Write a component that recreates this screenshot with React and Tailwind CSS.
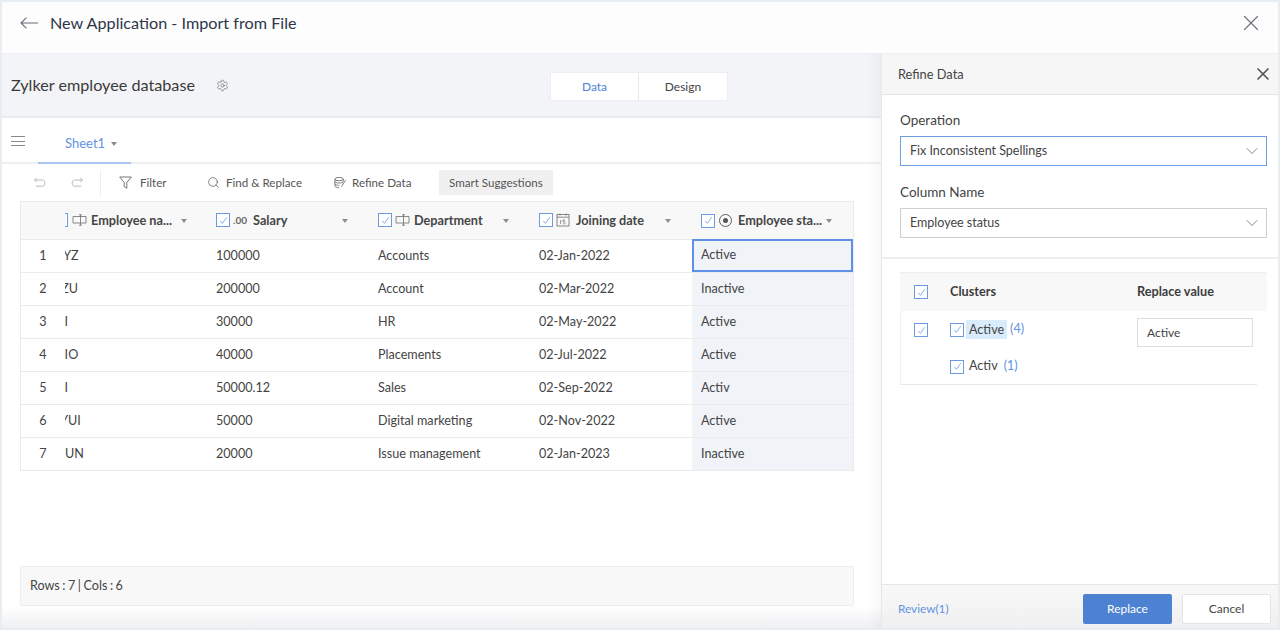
import React from 'react';
import { ChevronDown, Search, Settings, X } from 'lucide-react';

const rows = [
  { n: 1, name: 'XYZ', clip: '-ml-[10px]', salary: '100000', dept: 'Accounts', date: '02-Jan-2022', status: 'Active' },
  { n: 2, name: 'XZU', clip: '-ml-[12px]', salary: '200000', dept: 'Account', date: '02-Mar-2022', status: 'Inactive' },
  { n: 3, name: 'HI', clip: '-ml-[10px]', salary: '30000', dept: 'HR', date: '02-May-2022', status: 'Active' },
  { n: 4, name: 'HIO', clip: '-ml-[10px]', salary: '40000', dept: 'Placements', date: '02-Jul-2022', status: 'Active' },
  { n: 5, name: 'HI', clip: '-ml-[10px]', salary: '50000.12', dept: 'Sales', date: '02-Sep-2022', status: 'Activ' },
  { n: 6, name: 'XYUI', clip: '-ml-[13px]', salary: '50000', dept: 'Digital marketing', date: '02-Nov-2022', status: 'Active' },
  { n: 7, name: 'UN', clip: 'ml-0', salary: '20000', dept: 'Issue management', date: '02-Jan-2023', status: 'Inactive' }
];

const CheckBox = ({ className = '' }) => (
  <span className={`flex h-[14px] w-[14px] shrink-0 items-center justify-center border border-[#6c9be0] bg-white ${className}`}>
    <svg viewBox="0 0 12 12" className="h-[11px] w-[11px]" fill="none" stroke="#6f9de2" strokeWidth="0.9">
      <path d="M2.500 6.500l2.300 2.600L9.500 2.500" />
    </svg>
  </span>
);

const Caret = ({ className = '' }) => (
  <span className={`h-0 w-0 shrink-0 border-x-[3.5px] border-t-[4px] border-x-transparent border-t-[#8d8d8d] ${className}`} />
);

const TextFieldIcon = () => (
  <svg viewBox="0 0 15 12" className="h-[12px] w-[15px] shrink-0" fill="none" stroke="#7a7a7a" strokeWidth="0.9">
    <path d="M1 2.500h13v6.500H1zM8.500.8v10.400M7 .8h3M7 11.200h3" />
  </svg>
);

const CalendarIcon = () => (
  <svg viewBox="0 0 14 14" className="h-[14px] w-[14px] shrink-0" fill="none" stroke="#6d6d6d" strokeWidth="0.8">
    <rect x="1" y="1.500" width="12" height="11.500" />
    <path d="M1 4.200h12M4 .5v2M10 .5v2" />
    <path d="M4.600 7v4M7 7H9M7 7v1.800c1.600-.4 2.300.2 2.200 1 0 1-1.400 1.400-2.400.8" strokeWidth="0.7" />
  </svg>
);

const RadioIcon = () => (
  <span className="flex h-[13px] w-[13px] shrink-0 items-center justify-center rounded-full border border-[#5f5f5f]">
    <span className="h-[5px] w-[5px] rounded-full bg-[#555555]" />
  </span>
);

const ColumnHead = ({ icon, label, labelClass = 'ml-0' }) => (
  <div className="flex items-center justify-between pl-[9px] pr-[21px]">
    <div className="flex min-w-0 items-center gap-[3px]">
      <CheckBox />
      {icon}
      <span className={`whitespace-nowrap text-[12.7px] font-bold text-[#454545] ${labelClass}`}>{label}</span>
    </div>
    <Caret />
  </div>
);

const Cell = ({ children }) => (
  <div className="flex items-center pl-[9px] text-[12.6px] text-[#444444]">{children}</div>
);

const SelectBox = ({ value, active }) => (
  <div className={`flex h-[30px] items-center justify-between border pl-[9px] pr-[4px] text-[12.5px] text-[#444444] ${active ? 'border-[#6d9de2]' : 'border-[#cfcfcf]'}`}>
    <span className="pt-px">{value}</span>
    <ChevronDown size={20} strokeWidth={1.2} className="text-[#8a8a8a]" />
  </div>
);

const ToolButton = ({ icon, label, className = '' }) => (
  <div className={`flex items-center text-[11.6px] text-[#555555] ${className}`}>
    {icon}
    <span>{label}</span>
  </div>
);

export default function App() {
  return (
    <div className="h-[630px] w-[1280px] overflow-hidden bg-[#e8edf3] p-[2px] font-['Lato',sans-serif]">
      <div className="flex h-[626px] flex-col bg-white">
        {/* top title bar */}
        <div className="flex h-[52px] shrink-0 items-center justify-between border-b border-[#eeeff2] bg-[#fdfdfe] pb-[9px] pl-[18px] pr-[14px]">
          <div className="flex items-center gap-[12px]">
            <svg viewBox="0 0 18 12" className="h-[12px] w-[18px]" fill="none" stroke="#666c78" strokeWidth="1.100">
              <path d="M18 6H1M6.500.7L1 6l5.500 5.300" />
            </svg>
            <span className="text-[16.2px] text-[#2d3648]">New Application - Import from File</span>
          </div>
          <X size={26} strokeWidth={1.1} className="text-[#6f7380]" />
        </div>

        <div className="flex min-h-0 flex-1">
          {/* left side */}
          <div className="relative flex w-[879px] shrink-0 flex-col">
            <div className="flex h-[64px] shrink-0 items-center border-b-2 border-[#ebecef] bg-[#f3f4f7] pl-[9px]">
              <span className="w-[205px] whitespace-nowrap text-[16.2px] text-[#3a3a3a]">Zylker employee database</span>
              <Settings size={13} strokeWidth={1.2} className="text-[#666666]" />
              <div className="ml-[321px] mt-[3px] flex h-[29px] w-[178px] rounded-[2px] border border-[#eceef1] bg-white text-[12px]">
                <div className="flex w-[88px] items-center justify-center border-r border-[#e8e8e8] text-[#4d82d8]">Data</div>
                <div className="flex flex-1 items-center justify-center text-[#444444]">Design</div>
              </div>
            </div>

            <div className="flex h-[46px] shrink-0 items-end border-b-2 border-[#eeeff1] pl-[9px]">
              <div className="mb-[11px] flex w-[14px] flex-col gap-[3.5px] self-end pb-[5px]">
                <span className="h-px bg-[#888888]" />
                <span className="h-px bg-[#888888]" />
                <span className="h-px bg-[#888888]" />
              </div>
              <div className="relative top-[2px] ml-[13px] flex h-[36px] w-[93px] items-center gap-[6px] border-b-2 border-[#a9c4ee] pb-[3px] pl-[27px]">
                <span className="text-[13px] text-[#5f93e0]">Sheet1</span>
                <Caret />
              </div>
            </div>

            <div className="flex h-[37px] shrink-0 items-center pl-[31px]">
              <svg viewBox="0 0 14 12" className="h-[11px] w-[14px]" fill="none" stroke="#b5b5b5" strokeWidth="1">
                <path d="M3.500 1L1 3.300l2.500 2.200M1 3.300h9c3 0 3 6.700 0 6.700H2.500" />
              </svg>
              <svg viewBox="0 0 14 12" className="ml-[23px] h-[11px] w-[14px]" fill="none" stroke="#b5b5b5" strokeWidth="1">
                <path d="M10.500 1L13 3.300l-2.500 2.200M13 3.300H4c-3 0-3 6.700 0 6.700h7.500" />
              </svg>
              <span className="ml-[16px] h-[26px] w-px bg-[#eeeeee]" />
              <ToolButton
                className="ml-[18px] w-[88px] gap-[8px]"
                icon={
                  <svg viewBox="0 0 13 13" className="h-[13px] w-[13px]" fill="none" stroke="#666666" strokeWidth="0.9">
                    <path d="M.7 1h11.600L7.800 6.500v5.800l-2.600-1.700V6.500z" />
                  </svg>
                }
                label="Filter"
              />
              <ToolButton className="w-[127px] gap-[6px]" icon={<Search size={13} strokeWidth={1.3} />} label="Find & Replace" />
              <ToolButton
                className="w-[105px] gap-[5px]"
                icon={
                  <svg viewBox="0 0 14 13" className="h-[13px] w-[13px]" fill="none" stroke="#666666" strokeWidth="0.9">
                    <ellipse cx="5.500" cy="2.800" rx="4.500" ry="1.800" />
                    <path d="M1 2.800v7.500c0 1 2 1.800 4.500 1.800M1 5.300c0 1 2 1.800 4.500 1.800S10 6.300 10 5.300M1 7.800c0 1 2 1.800 4.500 1.800M10 2.800v2.500M8 11l4.500-7" />
                  </svg>
                }
                label="Refine Data"
              />
              <div className="flex h-[25px] items-center bg-[#f0f0f0] px-[10px] text-[11.6px] text-[#555555]">Smart Suggestions</div>
            </div>

            {/* sheet table */}
            <div className="ml-[18px] w-[834px] border border-[#ebebeb]">
              <div className="grid h-[37px] grid-cols-[44px_142px_162px_161px_162px_161px] bg-[#f8f8f8]">
                <div />
                <div className="flex items-center justify-between overflow-hidden pr-[20px]">
                  <div className="flex items-center gap-[4px] whitespace-nowrap">
                    <CheckBox className="-ml-[11px]" />
                    <TextFieldIcon />
                    <span className="text-[12.7px] font-bold text-[#454545]">Employee na...</span>
                  </div>
                  <Caret />
                </div>
                <ColumnHead icon={<span className="w-[14px] text-[10px] font-bold text-[#666666]">.00</span>} label="Salary" labelClass="ml-[3px]" />
                <ColumnHead icon={<TextFieldIcon />} label="Department" labelClass="ml-px" />
                <ColumnHead icon={<CalendarIcon />} label="Joining date" labelClass="ml-[3px]" />
                <div className="flex items-center pl-[9px]">
                  <CheckBox />
                  <span className="ml-[4px]"><RadioIcon /></span>
                  <span className="ml-[6px] whitespace-nowrap text-[12.7px] font-bold text-[#454545]">Employee sta...</span>
                  <Caret className="ml-[4px]" />
                </div>
              </div>
              {rows.map((row) => (
                <div key={row.n} className="grid h-[33px] grid-cols-[44px_142px_162px_161px_162px_161px] border-t border-[#ebebeb]">
                  <div className="flex items-center justify-center text-[12.6px] text-[#444444]">{row.n}</div>
                  <div className="flex items-center overflow-hidden text-[12.6px] text-[#444444]">
                    <span className={`whitespace-nowrap ${row.clip}`}>{row.name}</span>
                  </div>
                  <Cell>{row.salary}</Cell>
                  <Cell>{row.dept}</Cell>
                  <Cell>{row.date}</Cell>
                  <div className={`flex items-center text-[12.6px] text-[#444444] ${row.n === 1 ? '-mt-px border-2 border-[#5f90e8] bg-[#f0f3f8] pl-[7px]' : 'bg-[#f0f3f8] pl-[9px]'}`}>
                    {row.status}
                  </div>
                </div>
              ))}
            </div>

            <div className="ml-[18px] mt-[95px] flex h-[40px] w-[834px] shrink-0 items-center border border-[#eeeeee] bg-[#f8f8f8] pl-[9px] text-[12.6px] text-[#444444] [word-spacing:-0.7px]">
              Rows : 7 | Cols : 6
            </div>
            <div className="flex-1 bg-gradient-to-b from-white to-[#eff0f2]" />
            {/* soft shadow from the side panel */}
            <div className="absolute inset-y-0 right-0 w-[14px] bg-gradient-to-r from-transparent to-[#00000008]" />
          </div>

          {/* refine data panel */}
          <div className="flex flex-1 flex-col border-l border-[#e6e8ec]">
            <div className="flex h-[41px] shrink-0 items-center justify-between border-b border-[#e6e6e6] bg-[#f6f6f6] pl-[16px] pr-[5px]">
              <span className="pt-[2px] text-[12.8px] text-[#444444]">Refine Data</span>
              <X size={20} strokeWidth={2} className="text-[#555555]" />
            </div>
            <div className="flex h-[164px] shrink-0 flex-col border-b-2 border-[#eeeeee] pl-[18px] pr-[11px] pt-[15px]">
              <label className="mb-[6px] block h-[20px] text-[13.5px] leading-[20px] text-[#444444]">Operation</label>
              <SelectBox value="Fix Inconsistent Spellings" active />
              <label className="mb-[6px] mt-[16px] block h-[20px] text-[13.5px] leading-[20px] text-[#444444]">Column Name</label>
              <SelectBox value="Employee status" />
            </div>

            <div className="ml-[18px] mr-[11px] mt-[13px] border-t border-[#efefef]">
              <div className="flex h-[38px] items-center bg-[#f8f8f8] pl-[14px]">
                <CheckBox />
                <span className="ml-[22px] w-[187px] text-[12.7px] font-bold text-[#3d3d3d]">Clusters</span>
                <span className="text-[12.7px] font-bold text-[#3d3d3d]">Replace value</span>
              </div>
              <div className="mr-[10px] flex h-[74px] border-b border-l border-b-[#e8e8e8] border-l-[#f1f1f1] pl-[13px]">
                <CheckBox className="mt-[12px]" />
                <div className="ml-[22px] w-[187px] pt-[9px]">
                  <div className="flex h-[19px] items-center text-[12.6px]">
                    <CheckBox />
                    <span className="ml-[2px] bg-[#d8ecfb] px-[3px] leading-[19px] text-[#444444]">Active</span>
                    <span className="ml-[3px] text-[#5f93e0]">(4)</span>
                  </div>
                  <div className="mt-[18px] flex h-[19px] items-center text-[12.6px]">
                    <CheckBox />
                    <span className="ml-[5px] text-[#444444]">Activ</span>
                    <span className="ml-[6px] text-[#5f93e0]">(1)</span>
                  </div>
                </div>
                <div className="mt-[7px] flex h-[29px] w-[116px] shrink-0 items-center border border-[#dddddd] pl-[9px] text-[12px] text-[#444444]">Active</div>
              </div>
            </div>

            <div className="flex-1" />
            <div className="flex h-[44px] shrink-0 items-center border-t border-[#e6e6e6] bg-gradient-to-b from-[#f8f8f8] to-[#f0f0f0] pl-[16px] pr-[7px] pt-[5px]">
              <span className="text-[11.8px] text-[#5f93e0]">Review(1)</span>
              <button className="ml-auto h-[30px] w-[89px] rounded-[2px] bg-[#4d82d2] text-[12px] text-white">Replace</button>
              <button className="ml-[10px] h-[30px] w-[89px] rounded-[2px] border border-[#e4e4e4] bg-white text-[12px] text-[#444444]">Cancel</button>
            </div>
          </div>
        </div>
      </div>
    </div>
  );
}
